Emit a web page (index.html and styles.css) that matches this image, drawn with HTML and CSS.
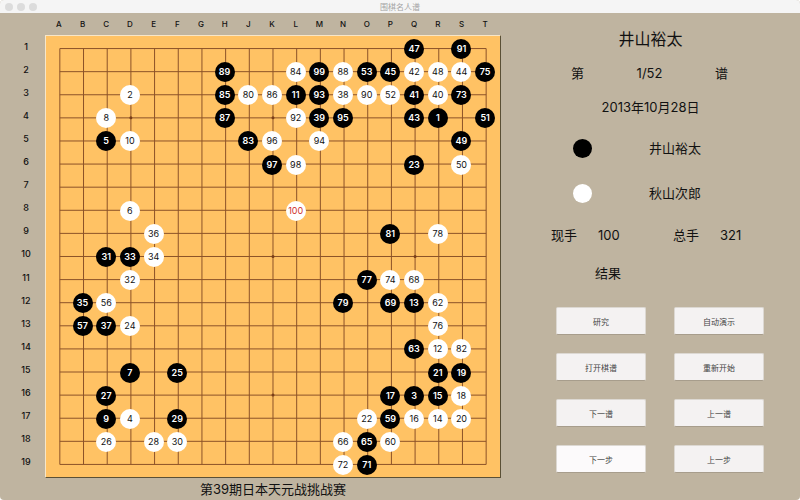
FILE: index.html
```html
<!DOCTYPE html>
<html lang="zh-CN">
<head>
  <meta charset="UTF-8">
  <meta name="viewport" content="width=device-width, initial-scale=1.0">
  <title>围棋名人谱</title>
  <link rel="stylesheet" href="styles.css">
</head>
<body>
  <div class="window">
    <header class="titlebar">
      <div class="lights"><span></span><span></span><span></span></div>
      <h1>围棋名人谱</h1>
    </header>

    <main class="main">
      <section class="board-area">
        <div class="col-labels" id="col-labels"></div>
        <div class="row-labels" id="row-labels"></div>
        <div class="board" id="board">
          <svg class="lines" viewBox="0 0 19 19" preserveAspectRatio="none" aria-hidden="true">
            <path id="grid-path" d=""/>
            <path class="star" d="M3.5 3.5h0M9.5 3.5h0M9.5 9.5h0M15.5 9.5h0M9.5 15.5h0"/>
          </svg>
        </div>
        <p class="caption">第39期日本天元战挑战赛</p>
      </section>

      <aside class="side">
        <h2 class="master">井山裕太</h2>
        <div class="record">
          <span>第</span>
          <span>1/52</span>
          <span>谱</span>
        </div>
        <p class="date">2013年10月28日</p>
        <div class="player">
          <span class="disc black"></span>
          <span>井山裕太</span>
        </div>
        <div class="player">
          <span class="disc white"></span>
          <span>秋山次郎</span>
        </div>
        <div class="counts">
          <span>现手</span>
          <span>100</span>
          <span>总手</span>
          <span>321</span>
        </div>
        <p class="result">结果</p>
        <div class="buttons">
          <button type="button">研究</button>
          <button type="button">自动演示</button>
          <button type="button">打开棋谱</button>
          <button type="button">重新开始</button>
          <button type="button">下一谱</button>
          <button type="button">上一谱</button>
          <button type="button" class="active">下一步</button>
          <button type="button">上一步</button>
        </div>
      </aside>
    </main>
  </div>

  <script src="board.js"></script>
</body>
</html>
```

FILE: styles.css
```css
* {
  box-sizing: border-box;
}

body {
  margin: 0;
  background-color: #fff;
  color: #111;
  font-family: Inter, "Noto Sans CJK SC", sans-serif;
  font-size: 13px;
  line-height: 20px;
}

h1, h2, p {
  margin: 0;
  font-weight: normal;
}

.window {
  display: flex;
  flex-direction: column;
  min-height: 100vh;
  background-color: #bfb4a0;
  border-radius: 4px;
  overflow: hidden;
}

/* title bar */
.titlebar {
  display: grid;
  grid-template-columns: 1fr auto 1fr;
  align-items: center;
  height: 13px;
  padding: 0 5px;
  background-color: #f5f5f5;
}

.titlebar h1 {
  font-size: 8px;
  line-height: 12px;
  color: #a4a4a4;
}

.lights {
  display: flex;
  gap: 4px;
}

.lights span {
  width: 8px;
  height: 8px;
  border-radius: 50%;
  background-color: #dcdcdc;
}

.main {
  flex: 1;
  display: grid;
  grid-template-columns: minmax(0, 1fr) 299px;
}

/* board */
.board-area {
  display: grid;
  grid-template-columns: 45px minmax(0, 1fr);
  grid-template-rows: 22px 1fr 22px;
}

.col-labels,
.row-labels {
  display: grid;
  place-items: center;
  font-size: 8px;
  font-weight: 500;
  line-height: 10px;
}

.col-labels {
  grid-column: 2;
  grid-template-columns: repeat(19, minmax(0, 1fr));
  padding: 0 4px 0 2px;
}

.row-labels {
  grid-template-rows: repeat(19, minmax(0, 1fr));
  padding: 0 7px 4px 14px;
  font-size: 9px;
}

.board {
  display: grid;
  grid-template-columns: repeat(19, minmax(0, 1fr));
  grid-template-rows: repeat(19, minmax(0, 1fr));
  padding: 1px 2px;
  background-color: #ffc264;
  border: 1px solid #f7e6c8;
  border-right-color: #5a5036;
  border-bottom-color: #5a5036;
}

/* keeps the square viewBox from setting the board height */
.lines {
  grid-area: 1 / 1 / -1 / -1;
  contain: size;
  width: 100%;
  height: 100%;
  min-height: 0;
}

.lines path {
  fill: none;
  stroke: #8c5228;
  stroke-width: 1px;
  vector-effect: non-scaling-stroke;
}

.lines .star {
  stroke: #7a3e18;
  stroke-width: 3px;
  stroke-linecap: round;
}

.stone {
  place-self: center;
  width: 20px;
  height: 20px;
  margin: 1px 2px 0 0;
  border-radius: 50%;
  font-size: 9px;
  line-height: 20px;
  text-align: center;
}

.black {
  background-color: #000;
  color: #fff;
}

.white {
  background-color: #fff;
  color: #111;
}

.stone.black {
  font-weight: 600;
}

.stone.last {
  color: #d0312d;
}

.caption {
  grid-column: 2;
  text-align: center;
  line-height: 22px;
}

/* side panel */
.side {
  padding-top: 14px;
}

.master {
  font-size: 16px;
  line-height: 24px;
  text-align: center;
}

.record {
  display: flex;
  justify-content: space-between;
  margin-top: 12px;
  padding: 0 72px 0 70px;
}

.date {
  margin: 14px 0 21px;
  text-align: center;
}

.player {
  display: flex;
  align-items: center;
  gap: 57px;
  padding-left: 72px;
}

.player + .player {
  margin-top: 25px;
}

.disc {
  width: 19px;
  height: 19px;
  border-radius: 50%;
}

.counts {
  display: grid;
  grid-template-columns: 47px 75px 47px auto;
  margin-top: 22px;
  padding-left: 50px;
}

.result {
  margin: 18px 0 24px;
  padding-left: 94px;
}

.buttons {
  display: grid;
  grid-template-columns: 1fr 1fr;
  gap: 18px 28px;
  padding: 0 36px 0 55px;
}

.buttons button {
  height: 28px;
  padding: 0;
  border: 1px solid #dcd8d2;
  border-bottom-color: #a79d8c;
  border-radius: 2px;
  background-color: #f4f2f2;
  color: #444;
  font-family: inherit;
  font-size: 8px;
}

.buttons .active {
  background-color: #fcfafb;
}
```

FILE: board.js
```js
const COLS = 'ABCDEFGHJKLMNOPQRST';

// one entry per board row: move number + column letter
const rows = {
  1: '47Q 91S',
  2: '89H 84L 99M 88N 53O 45P 42Q 48R 44S 75T',
  3: '2D 85H 80J 86K 11L 93M 38N 90O 52P 41Q 40R 73S',
  4: '8C 87H 92L 39M 95N 43Q 1R 51T',
  5: '5C 10D 83J 96K 94M 49S',
  6: '97K 98L 23Q 50S',
  8: '6D 100L',
  9: '36E 81P 78R',
  10: '31C 33D 34E',
  11: '32D 77O 74P 68Q',
  12: '35B 56C 79N 69P 13Q 62R',
  13: '57B 37C 24D 76R',
  14: '63Q 12R 82S',
  15: '7D 25F 21R 19S',
  16: '27C 17P 3Q 15R 18S',
  17: '9C 4D 29F 22O 59P 16Q 14R 20S',
  18: '26C 28E 30F 66N 65O 60P',
  19: '72N 71O'
};
const lastMove = 100;

function addSpan(parent, text) {
  const span = document.createElement('span');
  span.textContent = text;
  parent.appendChild(span);
  return span;
}

const board = document.getElementById('board');
const colLabels = document.getElementById('col-labels');
const rowLabels = document.getElementById('row-labels');

let path = '';
for (let i = 0; i < 19; i++) {
  addSpan(colLabels, COLS[i]);
  addSpan(rowLabels, i + 1);
  path += `M0.5 ${i + 0.5}H18.5M${i + 0.5} 0.5V18.5`;
}
document.getElementById('grid-path').setAttribute('d', path);

for (const row in rows) {
  for (const item of rows[row].split(' ')) {
    const move = parseInt(item, 10);
    const stone = addSpan(board, move);
    // black plays the odd moves
    stone.className = 'stone ' + (move % 2 ? 'black' : 'white');
    if (move === lastMove) stone.classList.add('last');
    stone.style.gridArea = `${row} / ${COLS.indexOf(item.slice(-1)) + 1}`;
  }
}
```
